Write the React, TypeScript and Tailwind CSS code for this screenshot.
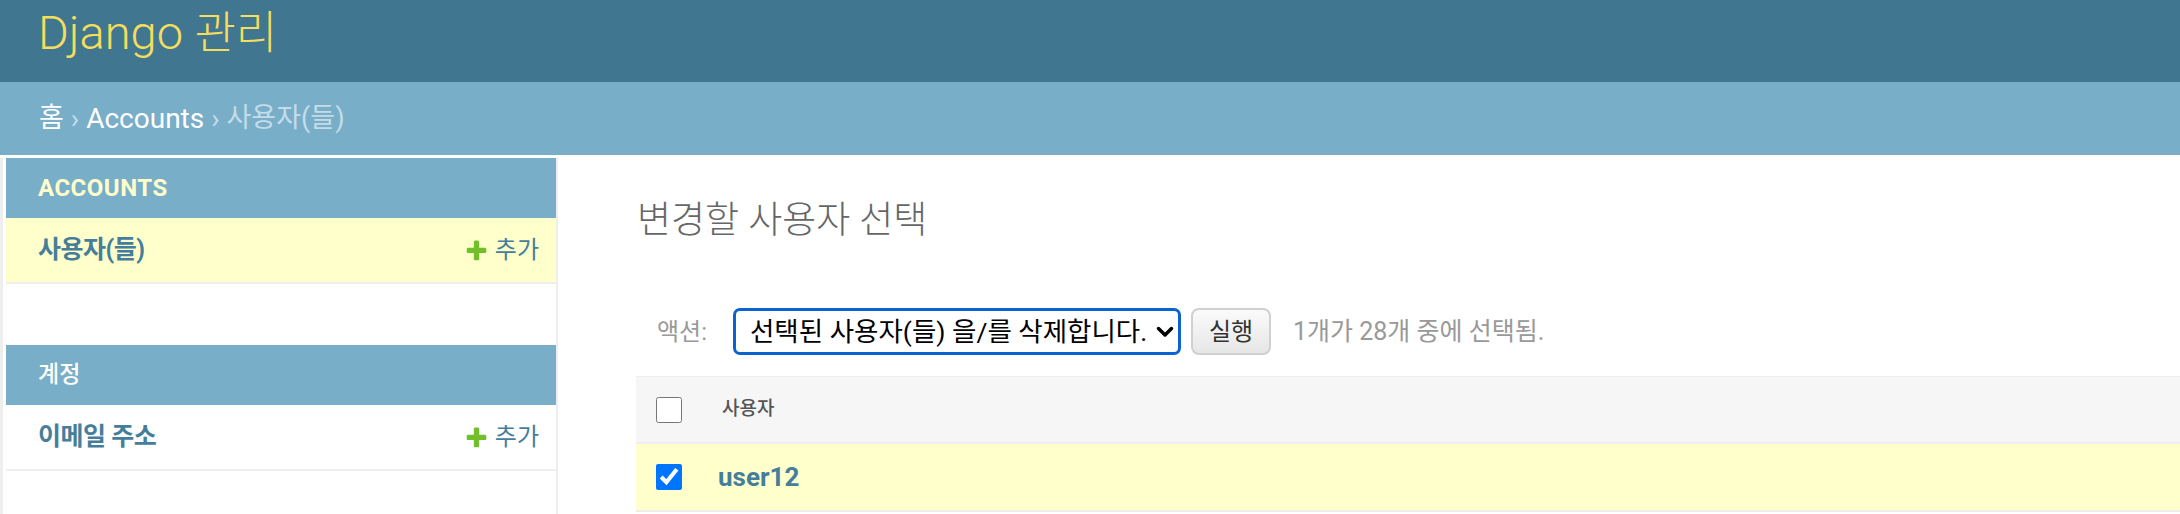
import React from "react";

const AddIcon = () => (
  <svg viewBox="0 0 1792 1792" className="w-[25px] h-[25px]">
    <path
      fill="#70bf2b"
      d="M1600 796v192q0 40-28 68t-68 28h-416v416q0 40-28 68t-68 28h-192q-40 0-68-28t-28-68v-416h-416q-40 0-68-28t-28-68v-192q0-40 28-68t68-28h416v-416q0-40 28-68t68-28h192q40 0 68 28t28 68v416h416q40 0 68 28t28 68z"
    />
  </svg>
);

const NavModule = ({ title, current, model }: { title: string; current?: boolean; model: string }) => (
  <div>
    <div className="h-[60px] bg-[#79aec8] flex items-center pl-[32px]">
      {current ? (
        <span className="text-[24px] font-bold tracking-[0.5px] text-[#ffffcc]">{title}</span>
      ) : (
        <span className="text-[23px] font-medium text-white">{title}</span>
      )}
    </div>
    <div
      className={`h-[66px] border-b-2 border-[#eee] flex items-center justify-between pl-[32px] pr-[17px] ${
        current ? "bg-[#ffffcc]" : "bg-white"
      }`}
    >
      <span className="text-[25px] font-bold text-[#447e9b] tracking-[-0.5px]">{model}</span>
      <span className="flex items-center gap-[6px] text-[24px] text-[#447e9b]">
        <AddIcon />
        추가
      </span>
    </div>
  </div>
);

export default function App() {
  return (
    <div className="min-h-screen bg-white font-['Roboto','Noto_Sans_CJK_KR',sans-serif]">
      <header className="h-[82px] bg-[#417690] pl-[38px] pt-[9px]">
        <h1 className="text-[47px] leading-none font-light text-[#f5dd5d]">
          Django <span className="text-[45px]">관리</span>
        </h1>
      </header>

      <div className="h-[73px] bg-[#79aec8] pl-[39px] flex items-center text-[28px] text-white">
        <span className="text-[27px]">홈</span>
        <span className="text-[#c4dce8]">&nbsp;›&nbsp;</span>
        <span>Accounts</span>
        <span className="text-[#c4dce8]">&nbsp;›&nbsp;</span>
        <span className="text-[27px] text-[#c4dce8]">사용자(들)</span>
      </div>

      <div className="flex pt-[3px]">
        <nav className="w-[558px] shrink-0 min-h-[360px] border-l-[3px] border-r-2 border-[#eee] pl-[3px]">
          <NavModule title="ACCOUNTS" current model="사용자(들)" />
          <div className="mt-[61px]">
            <NavModule title="계정" model="이메일 주소" />
          </div>
        </nav>

        <main className="flex-1 pl-[78px]">
          <h1 className="mt-[43px] ml-[1px] text-[37px] leading-[40px] font-light text-[#666]">
            변경할 사용자 선택
          </h1>

          <div className="mt-[67px] h-[47px] pl-[21px] flex items-center">
            <label className="text-[24px] text-[#999]">액션:</label>
            <div className="relative ml-[26px]">
              <select className="appearance-none w-[448px] h-[47px] border-[3px] border-[#0b63d1] rounded-[7px] pl-[14px] pr-[24px] text-[26.5px] text-black bg-white outline-none">
                <option>선택된 사용자(들) 을/를 삭제합니다.</option>
              </select>
              <svg
                className="absolute right-[7px] top-1/2 -translate-y-1/2 pointer-events-none"
                width="18"
                height="12"
                viewBox="0 0 18 12"
              >
                <path d="M2.5 2.5l6.5 6.5 6.5-6.5" stroke="#000" strokeWidth="3.5" fill="none" strokeLinecap="round" strokeLinejoin="round" />
              </svg>
            </div>
            <button className="ml-[10px] w-[80px] h-[47px] rounded-[8px] border-2 border-[#d0d0d0] bg-linear-to-b from-[#fbfbfb] to-[#e6e6e6] text-[24px] text-[#333]">
              실행
            </button>
            <span className="ml-[22px] text-[25px] text-[#999]">1개가 28개 중에 선택됨.</span>
          </div>

          <div className="mt-[21px] border-t border-[#eee]">
            <div className="h-[67px] bg-[#f6f6f6] border-b-2 border-[#eee] flex items-center pl-[20px]">
              <input type="checkbox" className="w-[26px] h-[26px] m-0" />
              <span className="ml-[40px] text-[19px] font-medium text-[#555]">사용자</span>
            </div>
            <div className="h-[68px] bg-[#ffffcc] border-b-2 border-[#eee] flex items-center pl-[20px]">
              <input type="checkbox" defaultChecked className="w-[26px] h-[26px] m-0" />
              <span className="ml-[36px] text-[26px] font-bold text-[#447e9b]">user12</span>
            </div>
          </div>
        </main>
      </div>
    </div>
  );
}
